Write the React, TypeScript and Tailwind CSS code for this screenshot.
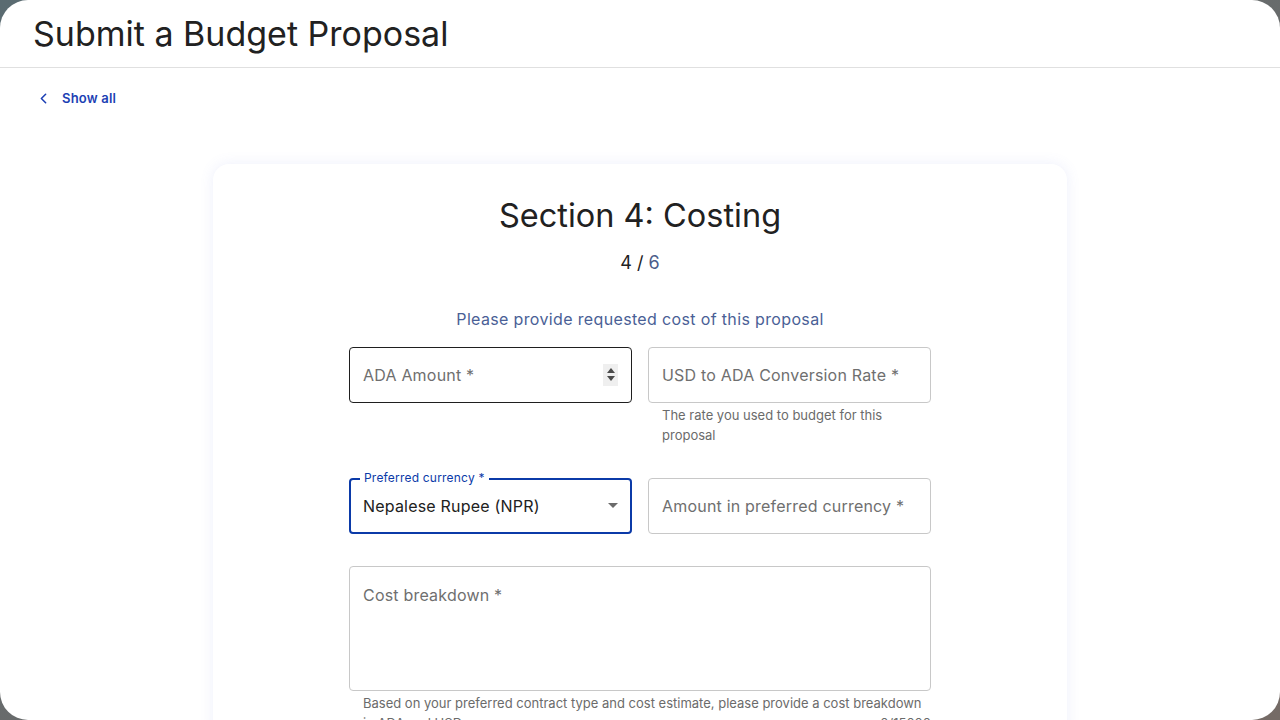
import { ChevronLeft } from "lucide-react";

const font = { fontFamily: "Inter, 'Noto Sans', sans-serif" };

const OutlinedInput = ({ label, number = false }: { label: string; number?: boolean }) => (
  <div
    className={`flex h-[56px] items-center justify-between rounded-[4px] border bg-white px-[13px] ${
      number ? "border-[#1f1f1f]" : "border-[#c8c8c8]"
    }`}
  >
    <span className="text-[16px] tracking-[0.2px] text-[#6f6f6f]">{label}</span>
    {number && (
      <span className="flex h-[22px] w-[15px] flex-col items-center justify-center gap-[3px] bg-[#efefef]">
        <svg width="8" height="5" viewBox="0 0 8 5">
          <path d="M0 5 L4 0 L8 5 Z" fill="#4a4a4a" />
        </svg>
        <svg width="8" height="5" viewBox="0 0 8 5">
          <path d="M0 0 L4 5 L8 0 Z" fill="#4a4a4a" />
        </svg>
      </span>
    )}
  </div>
);

export default function App() {
  return (
    <div
      className="h-[720px] w-[1280px] overflow-hidden bg-gradient-to-br from-[#5a6b71] to-[#756b66]"
      style={font}
    >
      <div className="flex h-full w-full flex-col overflow-hidden rounded-[28px] bg-white">
        {/* Header */}
        <div className="flex h-[68px] shrink-0 items-center border-b border-[#e0e0e0] px-[33px]">
          <h1 className="text-[34px] font-normal leading-none text-[#212121]">Submit a Budget Proposal</h1>
        </div>

        <div className="flex items-center gap-[10px] px-[35px] pt-[21px]">
          <ChevronLeft className="h-[17px] w-[17px] text-[#1c3fb4]" strokeWidth={2.2} />
          <span className="text-[13px] font-semibold tracking-[0.2px] text-[#1c3fb4]">Show all</span>
        </div>

        {/* Card */}
        <div className="mx-auto mt-[55px] flex w-[854px] flex-1 flex-col items-center rounded-t-[16px] bg-white pt-[30px] shadow-[0_0_14px_rgba(110,120,220,0.12)]">
          <h2 className="text-[32.5px] font-normal leading-[44px] text-[#212121]">Section 4: Costing</h2>
          <div className="mt-[14px] text-[18px] leading-[22px]">
            <span className="text-[#212121]">4 / </span>
            <span className="text-[#4b5d8a]">6</span>
          </div>
          <p className="mt-[33px] text-[16px] leading-[24px] tracking-[0.35px] text-[#4a5f96]">
            Please provide requested cost of this proposal
          </p>

          <div className="mt-[16px] flex w-[582px] flex-col">
            <div className="grid grid-cols-2 gap-[16px]">
              <OutlinedInput label="ADA Amount *" number />
              <div>
                <OutlinedInput label="USD to ADA Conversion Rate *" />
                <p className="px-[14px] pt-[2px] text-[13px] leading-[20px] text-[#6b6b6b]">
                  The rate you used to budget for this proposal
                </p>
              </div>
            </div>

            <div className="mt-[33px] grid grid-cols-2 gap-[16px]">
              <div className="relative flex h-[56px] items-center justify-between rounded-[4px] border-2 border-[#0b3aa8] px-[12px]">
                <span className="absolute -top-[10px] left-[9px] bg-white px-[4px] text-[12px] leading-[16px] tracking-[0.2px] text-[#0b3aa8]">
                  Preferred currency *
                </span>
                <span className="text-[16px] tracking-[0.2px] text-[#212121]">Nepalese Rupee (NPR)</span>
                <svg width="10" height="5" viewBox="0 0 10 5">
                  <path d="M0 0 L5 5 L10 0 Z" fill="#6b6b6b" />
                </svg>
              </div>
              <OutlinedInput label="Amount in preferred currency *" />
            </div>

            <div className="mt-[32px] h-[125px] rounded-[4px] border border-[#c8c8c8] px-[13px] pt-[16px]">
              <span className="text-[16px] tracking-[0.2px] text-[#6f6f6f]">Cost breakdown *</span>
            </div>
            <div className="pl-[14px] pt-[2px] text-[13px] leading-[20px] text-[#6b6b6b]">
              <p className="whitespace-nowrap">
                Based on your preferred contract type and cost estimate, please provide a cost breakdown
              </p>
              <div className="flex justify-between">
                <span>in ADA and USD</span>
                <span>0/15000</span>
              </div>
            </div>
          </div>
        </div>
      </div>
    </div>
  );
}
